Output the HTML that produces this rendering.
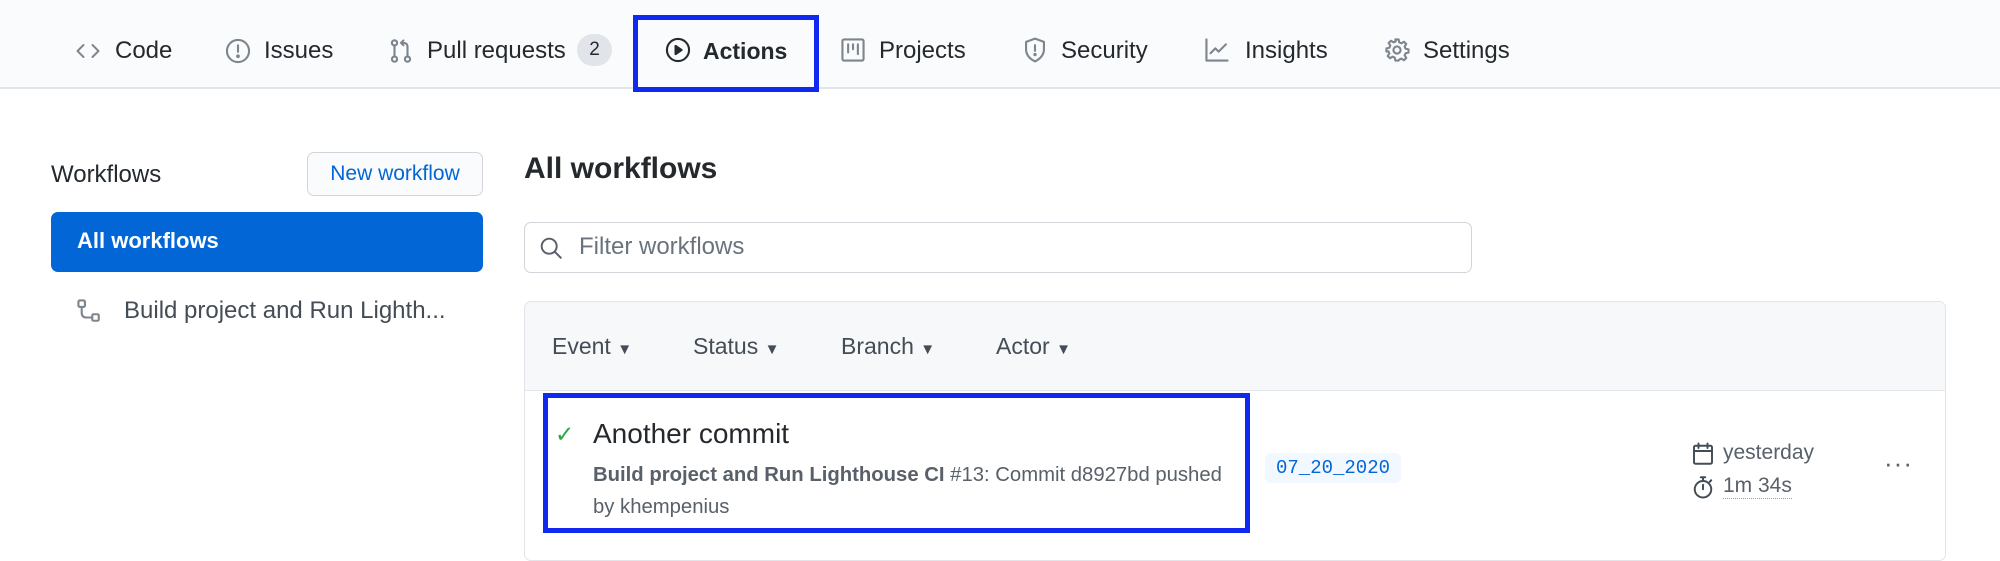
<!DOCTYPE html>
<html><head><meta charset="utf-8"><style>
*{margin:0;padding:0;box-sizing:border-box}
body{width:2000px;height:541px;overflow:hidden;background:#fff;font-family:"Liberation Sans",sans-serif;color:#24292e;position:relative}
.a{position:absolute;white-space:nowrap}
.nav{font-size:24px;color:#24292e;top:37px;line-height:28px}
svg.i{position:absolute;fill:none;stroke:#7d858e;stroke-width:1.3;stroke-linecap:round;stroke-linejoin:round}
</style></head><body>
<div class="a" style="left:0;top:0;width:2000px;height:89px;background:#fafbfc;border-bottom:2px solid #e1e4e8"></div>

<svg class="i" style="left:76px;top:39px" width="24" height="24" viewBox="0 0 16 16"><path d="M5 4L1 8l4 4M11 4l4 4-4 4"/></svg>
<div class="a nav" style="left:115px">Code</div>
<svg class="i" style="left:225px;top:38px" width="26" height="26" viewBox="0 0 16 16"><circle cx="8" cy="8" r="6.8"/><path d="M8 4.5v4"/><circle cx="8" cy="11.2" r=".5" fill="#7d858e"/></svg>
<div class="a nav" style="left:264px">Issues</div>
<svg class="i" style="left:388px;top:37px" width="26" height="28" viewBox="0 0 16 16"><circle cx="4" cy="3" r="1.6"/><circle cx="4" cy="13" r="1.6"/><circle cx="12" cy="13" r="1.6"/><path d="M4 4.6v6.8M12 11.4V5.5Q12 3 9.5 3H8M9.5 1.5L8 3l1.5 1.5"/></svg>
<div class="a nav" style="left:427px">Pull requests</div>
<div class="a" style="left:577px;top:34px;width:35px;height:32px;border-radius:16px;background:#e1e4e8;font-size:19px;text-align:center;line-height:32px">2</div>

<div class="a" style="left:633px;top:15px;width:186px;height:77px;border:5px solid #1128f0"></div>
<svg class="i" style="left:665px;top:37px;stroke:#24292e" width="26" height="26" viewBox="0 0 16 16"><circle cx="8" cy="8" r="6.8"/><path d="M6.5 5.5v5L10.2 8z" fill="#24292e"/></svg>
<div class="a nav" style="left:703px;font-weight:bold;font-size:23px">Actions</div>

<svg class="i" style="left:840px;top:37px" width="26" height="26" viewBox="0 0 16 16"><rect x="1.5" y="1.5" width="13" height="13" rx="1"/><path d="M5 4.5v5M8 4.5v3M11 4.5v6"/></svg>
<div class="a nav" style="left:879px">Projects</div>
<svg class="i" style="left:1022px;top:37px" width="26" height="26" viewBox="0 0 16 16"><path d="M8 1L2.5 3v4.5c0 3.5 2.5 6 5.5 7.5 3-1.5 5.5-4 5.5-7.5V3z"/><path d="M8 5v3.5"/><circle cx="8" cy="10.8" r=".4" fill="#7d858e"/></svg>
<div class="a nav" style="left:1061px">Security</div>
<svg class="i" style="left:1204px;top:37px" width="26" height="26" viewBox="0 0 16 16"><path d="M1.5 1.5v13h13M4 10l3-3 2 2 4.5-4.5"/></svg>
<div class="a nav" style="left:1245px">Insights</div>
<svg class="i" style="left:1384px;top:37px" width="26" height="26" viewBox="0 0 16 16"><circle cx="8" cy="8" r="2.2"/><path d="M7 1.5h2l.4 1.8 1.3.6 1.6-1 1.4 1.4-1 1.6.6 1.3 1.8.4v2l-1.8.4-.6 1.3 1 1.6-1.4 1.4-1.6-1-1.3.6L9 14.5H7l-.4-1.8-1.3-.6-1.6 1-1.4-1.4 1-1.6-.6-1.3L1.5 9V7l1.8-.4.6-1.3-1-1.6 1.4-1.4 1.6 1 1.3-.6z"/></svg>
<div class="a nav" style="left:1423px">Settings</div>

<div class="a" style="left:51px;top:161px;font-size:24px;color:#24292e">Workflows</div>
<div class="a" style="left:307px;top:152px;width:176px;height:44px;border:1px solid #d1d5da;border-radius:7px;background:#fafbfc;color:#0366d6;font-size:21px;text-align:center;line-height:42px">New workflow</div>
<div class="a" style="left:51px;top:212px;width:432px;height:60px;background:#0366d6;border-radius:7px"></div>
<div class="a" style="left:77px;top:228px;font-size:22px;color:#fff;font-weight:bold">All workflows</div>
<svg class="i" style="left:76px;top:298px" width="26" height="26" viewBox="0 0 16 16"><rect x="1.5" y="1.5" width="4" height="4" rx=".8"/><rect x="10" y="10" width="4" height="4" rx=".8"/><path d="M3.5 5.5v3.5q0 3 3 3H10"/></svg>
<div class="a" style="left:124px;top:297px;font-size:24px;color:#444d56">Build project and Run Lighth...</div>

<div class="a" style="left:524px;top:152px;font-size:30px;font-weight:bold;color:#24292e">All workflows</div>
<div class="a" style="left:524px;top:222px;width:948px;height:51px;border:1px solid #d1d5da;border-radius:7px"></div>
<svg class="i" style="left:539px;top:236px;stroke:#586069" width="24" height="24" viewBox="0 0 16 16"><circle cx="6.8" cy="6.8" r="5"/><path d="M10.5 10.5L14.5 14.5"/></svg>
<div class="a" style="left:579px;top:233px;font-size:24px;color:#6a737d">Filter workflows</div>

<div class="a" style="left:524px;top:301px;width:1422px;height:260px;border:1px solid #e1e4e8;border-radius:7px;overflow:hidden">
<div style="height:89px;background:#f6f8fa;border-bottom:1px solid #e1e4e8"></div></div>
<div class="a" style="left:552px;top:333px;font-size:23px;color:#444d56">Event <span style="font-size:15px">▼</span></div>
<div class="a" style="left:693px;top:333px;font-size:23px;color:#444d56">Status <span style="font-size:15px">▼</span></div>
<div class="a" style="left:841px;top:333px;font-size:23px;color:#444d56">Branch <span style="font-size:15px">▼</span></div>
<div class="a" style="left:996px;top:333px;font-size:23px;color:#444d56">Actor <span style="font-size:15px">▼</span></div>

<div class="a" style="left:543px;top:393px;width:707px;height:140px;border:5px solid #1128f0"></div>
<div class="a" style="left:555px;top:421px;font-size:23px;color:#28a745">✓</div>
<div class="a" style="left:593px;top:418px;font-size:28px;color:#24292e">Another commit</div>
<div class="a" style="left:593px;top:459px;font-size:20.3px;color:#586069;line-height:32px"><b>Build project and Run Lighthouse CI</b> #13: Commit d8927bd pushed<br>by khempenius</div>
<div class="a" style="left:1265px;top:453px;width:136px;height:30px;background:#f1f8ff;border-radius:6px;color:#0366d6;font-family:'Liberation Mono',monospace;font-size:19px;text-align:center;line-height:30px">07_20_2020</div>

<svg class="i" style="left:1691px;top:441px;stroke:#444d56" width="24" height="26" viewBox="0 0 16 16"><rect x="2" y="2.5" width="12" height="12" rx="1"/><path d="M2 6h12M5 1v3M11 1v3"/></svg>
<div class="a" style="left:1723px;top:441px;font-size:21px;color:#586069">yesterday</div>
<svg class="i" style="left:1691px;top:474px;stroke:#444d56" width="24" height="26" viewBox="0 0 16 16"><circle cx="8" cy="9.5" r="5.5"/><path d="M8 9.5V6.5M6.5 1.5h3M8 1.5V4M12.5 4.5l1 -1"/></svg>
<div class="a" style="left:1723px;top:474px;font-size:21px;color:#586069;border-bottom:1px dotted #959da5;line-height:24px">1m 34s</div>
<div class="a" style="left:1884px;top:448px;font-size:26px;color:#586069;letter-spacing:1px">···</div>
</body></html>
